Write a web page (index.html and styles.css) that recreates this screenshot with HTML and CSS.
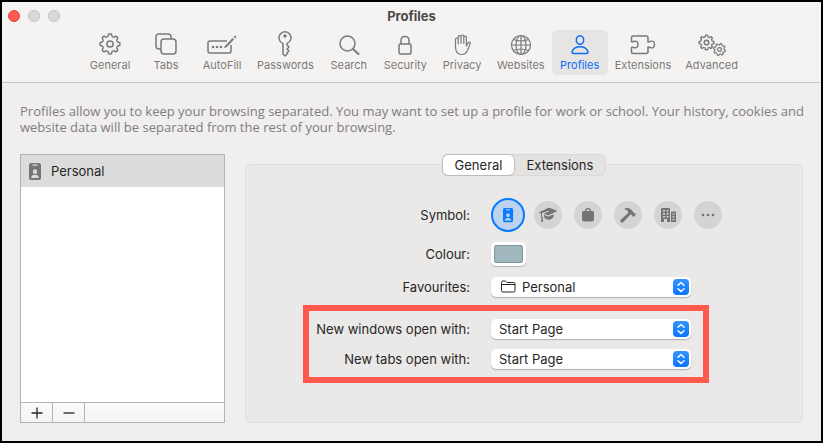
FILE: index.html
```html
<!DOCTYPE html>
<html lang="en-GB">
  <head>
    <meta charset="UTF-8" />
    <meta name="viewport" content="width=device-width, initial-scale=1.0" />
    <title>Profiles</title>
    <link rel="stylesheet" href="styles.css">
  </head>
  <body>
    <svg class="defs" aria-hidden="true">
      <defs>
        <path id="tooth" d="M-2.98-7.2Q-2-7.2-1.9-8L-1.6-9.2Q-1.5-9.9-.9-9.9H.9Q1.5-9.9 1.6-9.2L1.9-8Q2-7.2 2.98-7.2" />
        <g id="gear">
          <use href="#tooth" />
          <use href="#tooth" transform="rotate(45)" />
          <use href="#tooth" transform="rotate(90)" />
          <use href="#tooth" transform="rotate(135)" />
          <use href="#tooth" transform="rotate(180)" />
          <use href="#tooth" transform="rotate(225)" />
          <use href="#tooth" transform="rotate(270)" />
          <use href="#tooth" transform="rotate(315)" />
          <circle r="3.1" />
        </g>
        <path id="badge" fill-rule="evenodd" d="M2 0H10Q12 0 12 2V15Q12 17 10 17H2Q0 17 0 15V2Q0 0 2 0ZM4 1.5Q3.4 1.5 3.4 2.1T4 2.8H8Q8.6 2.8 8.6 2.1T8 1.5ZM6 6.3A2.2 2.4 0 1 0 6 11.100A2.200 2.400 0 1 0 6 6.300ZM2.200 15H9.800Q9.800 11.800 6 11.800T2.200 15Z" />
      </defs>
    </svg>

    <div class="window">
      <header class="header">
        <div class="titlebar">
          <div class="lights">
            <button class="light light--close" type="button" aria-label="Close"></button>
            <button class="light" type="button" aria-label="Minimise" disabled></button>
            <button class="light" type="button" aria-label="Zoom" disabled></button>
          </div>
          <h1 class="title">Profiles</h1>
        </div>

        <nav class="toolbar">
          <button class="tool" type="button">
            <svg class="tool__icon" width="28" height="26" viewBox="-14 -13 28 26"><use href="#gear" /></svg>
            General
          </button>
          <button class="tool" type="button">
            <svg class="tool__icon" width="28" height="26" viewBox="0 0 28 26"><path d="M9 18H7Q4 18 4 15V6Q4 3 7 3H16Q19 3 19 6V8" /><rect x="9" y="8" width="15" height="15" rx="3" /></svg>
            Tabs
          </button>
          <button class="tool" type="button">
            <svg class="tool__icon" width="32" height="26" viewBox="0 0 32 26"><path d="M21 10H4Q2 10 2 12V20Q2 22 4 22H23Q25 22 25 20V14" /><path class="solid" d="M19 15L26.500 7L28 8.500L20.600 16.300L17.800 17.200ZM27.500 6L29 4.500L30.500 6L29 7.500Z" /><circle class="solid" cx="7" cy="16" r="1.300" /><circle class="solid" cx="11" cy="16" r="1.300" /><circle class="solid" cx="15" cy="16" r="1.300" /></svg>
            AutoFill
          </button>
          <button class="tool" type="button">
            <svg class="tool__icon" width="28" height="26" viewBox="0 0 28 26"><path d="M12 12.500A6 6 0 1 1 16 12.500V14L18 16L16 18L18 20L16 22V23L14 25L12 23Z" /><circle class="solid" cx="14" cy="5" r="1.700" /></svg>
            Passwords
          </button>
          <button class="tool" type="button">
            <svg class="tool__icon" width="28" height="26" viewBox="0 0 28 26"><circle cx="12.500" cy="12.500" r="7.500" /><path class="thick" d="M18 18L23.500 23" /></svg>
            Search
          </button>
          <button class="tool" type="button">
            <svg class="tool__icon" width="28" height="26" viewBox="0 0 28 26"><rect x="8" y="13" width="12" height="10" rx="1.500" /><path d="M10 13V9.500Q10 5.500 14 5.500T18 9.500V13" /></svg>
            Security
          </button>
          <button class="tool" type="button">
            <svg class="tool__icon tool__icon--fine" width="28" height="26" viewBox="0 0 28 26"><path d="M7.500 16V8.500Q7.500 7 8.800 7T10.200 8.500V13V6Q10.200 4.700 11.600 4.700T13 6V12.500V5.300Q13 4 14.400 4T15.800 5.300V12.500V6.500Q15.800 5.200 17.100 5.200T18.400 6.500V15L20 12Q20.800 10.700 21.800 11.200T22 13L19.500 19.500Q17.800 23.500 13.700 23.500Q7.500 23.500 7.500 16Z" /></svg>
            Privacy
          </button>
          <button class="tool" type="button">
            <svg class="tool__icon tool__icon--fine" width="28" height="26" viewBox="0 0 28 26"><circle cx="14" cy="14" r="9.500" /><ellipse cx="14" cy="14" rx="5" ry="9.500" /><path d="M14 4.500V23.500M4.500 14H23.500M6.500 8.500Q14 11.500 21.500 8.500M6.500 19.500Q14 16.500 21.500 19.500" /></svg>
            Websites
          </button>
          <button class="tool tool--active" type="button" aria-current="page">
            <svg class="tool__icon" width="28" height="26" viewBox="0 0 28 26"><ellipse cx="14" cy="9" rx="3.700" ry="4.300" /><path d="M7.500 22.500Q6 22.500 6 21Q7.500 15.800 14 15.800T22 21Q22 22.500 20.500 22.500Z" /></svg>
            Profiles
          </button>
          <button class="tool" type="button">
            <svg class="tool__icon" width="28" height="26" viewBox="0 0 28 26"><path d="M4 5H17Q19 5 19 7V11Q20 11.300 21 10.500Q25.500 9 25.500 13.500T21 16.500Q20 15.700 19 16V20.500Q19 22.500 17 22.500H4Q2.500 22.500 2.500 21V16.500Q3.500 16 4.500 16.500Q9 17.500 9 13.500T4.500 10.500Q3.500 11 2.500 10.500V6.500Q2.500 5 4 5Z" /></svg>
            Extensions
          </button>
          <button class="tool" type="button">
            <svg class="tool__icon tool__icon--gears" width="30" height="26" viewBox="0 0 30 26"><use href="#gear" transform="translate(9.500 11.500) scale(.74)" /><use href="#gear" transform="translate(22.500 18.500) rotate(15) scale(.6)" /></svg>
            Advanced
          </button>
        </nav>
      </header>

      <main class="content">
        <p class="intro">Profiles allow you to keep your browsing separated. You may want to set up a profile for work or school. Your history, cookies and website data will be separated from the rest of your browsing.</p>

        <div class="columns">
          <section class="profiles" aria-label="Profiles">
            <ul class="profiles__list">
              <li>
                <button class="profile" type="button" aria-pressed="true">
                  <svg class="profile__icon" width="12" height="17" viewBox="0 0 12 17"><use href="#badge" /></svg>
                  Personal
                </button>
              </li>
            </ul>
            <div class="profiles__bar">
              <button class="bar-button" type="button" aria-label="Add profile"><svg width="12" height="12" viewBox="0 0 12 12"><path d="M6 .5V11.500M.5 6H11.500" /></svg></button>
              <button class="bar-button" type="button" aria-label="Remove profile"><svg width="12" height="12" viewBox="0 0 12 12"><path d="M.5 6H11.500" /></svg></button>
            </div>
          </section>

          <section class="panel">
            <div class="tabs" role="tablist">
              <button class="tab tab--active" type="button" role="tab" aria-selected="true">General</button>
              <button class="tab" type="button" role="tab" aria-selected="false">Extensions</button>
            </div>

            <form class="form">
              <div class="row" role="radiogroup" aria-labelledby="symbol-label">
                <span class="row__label" id="symbol-label">Symbol:</span>
                <div class="row__control symbols">
                  <label class="symbol">
                    <input class="symbol__input" type="radio" name="symbol" aria-label="Badge" checked>
                    <svg class="symbol__icon" width="18" height="18" viewBox="0 0 18 18"><use href="#badge" transform="translate(4 2) scale(.84)" /></svg>
                  </label>
                  <label class="symbol">
                    <input class="symbol__input" type="radio" name="symbol" aria-label="School">
                    <svg class="symbol__icon" width="18" height="18" viewBox="0 0 18 18"><path d="M.5 6L9 2Q10 1.500 11 2L17.500 4.500Q18 5 17.500 5.500L10 9Q9 9.500 8 9L4.500 7.500L10 5.500L9.500 4.800L3 7V10Q4.500 11.500 4 15.500Q2.500 16.500 2 15.500Q3 12 2 10.500V7.500L.5 7Q0 6.500.5 6ZM4.800 8.700L8 10.300Q9 10.700 10 10.300L14.500 8.300V11Q12 14.500 8.500 13.500L5.500 12Z" /></svg>
                  </label>
                  <label class="symbol">
                    <input class="symbol__input" type="radio" name="symbol" aria-label="Shopping">
                    <svg class="symbol__icon" width="18" height="18" viewBox="0 0 18 18"><path fill-rule="evenodd" d="M6 5Q6 2 9 2T12 5H13.500Q15 5 15 6.500V13.500Q15 15.500 13 15.500H5Q3 15.500 3 13.500V6.500Q3 5 4.500 5ZM7.200 5H10.800Q10.800 3.200 9 3.200T7.200 5Z" /></svg>
                  </label>
                  <label class="symbol">
                    <input class="symbol__input" type="radio" name="symbol" aria-label="Work">
                    <svg class="symbol__icon" width="18" height="18" viewBox="0 0 18 18"><path d="M5 3Q8.500 1 11.500 3L13.500 5Q14 6.500 15 6.500L17 8.500L14.500 11L12.700 9.300Q12.700 8.200 11.500 8.500L3.800 16.500Q2.800 17 1.800 16T1.500 14L9 7V5.500Q8 3.500 5 3Z" /></svg>
                  </label>
                  <label class="symbol">
                    <input class="symbol__input" type="radio" name="symbol" aria-label="Office">
                    <svg class="symbol__icon" width="18" height="18" viewBox="0 0 18 18"><path fill-rule="evenodd" d="M3 2H10Q11 2 11 3V16H8V13H5V16H2V3Q2 2 3 2ZM4 4V5.500H6V4ZM7.500 4V5.500H9.500V4ZM4 7V8.500H6V7ZM7.500 7V8.500H9.500V7ZM4 10V11.500H6V10ZM7.500 10V11.500H9.500V10ZM12 5.500H16Q17 5.500 17 6.500V16H12ZM13.500 7.500V8.700H15.500V7.500ZM13.500 10.300V11.500H15.500V10.300ZM13.500 13V14.300H15.500V13Z" /></svg>
                  </label>
                  <label class="symbol">
                    <input class="symbol__input" type="radio" name="symbol" aria-label="More">
                    <svg class="symbol__icon" width="18" height="18" viewBox="0 0 18 18"><circle cx="4" cy="9" r="1.300" /><circle cx="9" cy="9" r="1.300" /><circle cx="14" cy="9" r="1.300" /></svg>
                  </label>
                </div>
              </div>

              <div class="row row--colour">
                <label class="row__label" for="colour">Colour:</label>
                <div class="row__control"><input class="colour-well" type="color" id="colour" value="#9fb7bd"></div>
              </div>

              <div class="row">
                <label class="row__label" for="favourites">Favourites:</label>
                <div class="row__control popup popup--folder">
                  <svg class="popup__folder" width="15" height="13" viewBox="0 0 15 13"><path d="M1 4.500H14M.5 10.500V2.500Q.5 1 2 1H4.500L6 2.500H12.500Q14 2.500 14 4V10.500Q14 12 12.500 12H2Q.5 12 .5 10.500Z" /></svg>
                  <select class="popup__select" id="favourites"><option>Personal</option></select>
                  <svg class="popup__arrows" width="16" height="16" viewBox="0 0 16 16"><path d="M5 6.200L8 3.500L11 6.200M5 9.800L8 12.500L11 9.800" /></svg>
                </div>
              </div>

              <div class="open-with">
                <div class="row">
                  <label class="row__label" for="windows">New windows open with:</label>
                  <div class="row__control popup">
                    <select class="popup__select" id="windows"><option>Start Page</option></select>
                    <svg class="popup__arrows" width="16" height="16" viewBox="0 0 16 16"><path d="M5 6.200L8 3.500L11 6.200M5 9.800L8 12.500L11 9.800" /></svg>
                  </div>
                </div>
                <div class="row">
                  <label class="row__label" for="tabs">New tabs open with:</label>
                  <div class="row__control popup">
                    <select class="popup__select" id="tabs"><option>Start Page</option></select>
                    <svg class="popup__arrows" width="16" height="16" viewBox="0 0 16 16"><path d="M5 6.200L8 3.500L11 6.200M5 9.800L8 12.500L11 9.800" /></svg>
                  </div>
                </div>
              </div>
            </form>
          </section>
        </div>
      </main>
    </div>
  </body>
</html>
```
FILE: styles.css
```css
* {
  box-sizing: border-box;
}

body {
  background-color: #000;
  color: #262626;
  font-family: Inter, "Liberation Sans", sans-serif;
  font-size: 13px;
  line-height: 16px;
  margin: 0;
}

button,
select {
  color: inherit;
  font: inherit;
}

button {
  background: none;
  border: 0;
  padding: 0;
}

.defs {
  height: 0;
  position: absolute;
  width: 0;
}

.window {
  background-color: #f0eeef;
  border: 2px solid #000;
  display: flex;
  flex-direction: column;
  min-height: 100vh;
}

/* Title bar and toolbar */
.header {
  background-color: #f5f3f2;
  border-bottom: 1px solid #c9c7c6;
  border-radius: 4px 4px 0 0;
  padding-bottom: 7px;
}

.titlebar {
  align-items: center;
  display: grid;
  grid-template-columns: 1fr auto 1fr;
  height: 28px;
  padding: 0 6px;
}

.lights {
  display: flex;
  gap: 8px;
}

.light {
  background-color: #d9d8d6;
  border: 1px solid #c4c3c1;
  border-radius: 50%;
  height: 12px;
  width: 12px;
}

.light--close {
  background-color: #ff5b52;
  border-color: #e2453f;
}

.title {
  color: #4b4a49;
  font-size: 13px;
  font-weight: 700;
  margin: 0;
}

.toolbar {
  display: flex;
  justify-content: center;
  padding-left: 4px;
}

.tool {
  align-items: center;
  border-radius: 6px;
  color: #7b7a78;
  display: flex;
  flex-direction: column;
  font-size: 11px;
  height: 45px;
  min-width: 56px;
  padding: 1px 7px 0;
}

.tool--active {
  background-color: #e6e5e4;
  color: #0a6cf5;
}

.tool__icon {
  fill: none;
  stroke: currentColor;
  stroke-linejoin: round;
  stroke-width: 1.5;
}

.tool__icon--fine {
  stroke-width: 1.2;
}

.tool__icon--gears {
  stroke-width: 2;
}

.tool__icon .solid {
  fill: currentColor;
  stroke: none;
}

.tool__icon .thick {
  stroke-linecap: round;
  stroke-width: 2;
}

/* Page */
.content {
  display: flex;
  flex: 1;
  flex-direction: column;
  padding: 20px 10px 18px 18px;
}

.intro {
  color: #7f7d7e;
  font-family: "Open Sans", "Liberation Sans", sans-serif;
  margin: 0 0 19px;
}

.columns {
  display: flex;
  flex: 1;
  gap: 20px;
  padding-right: 8px;
}

.profiles {
  background-color: #fff;
  border: 1px solid #b3b2b2;
  display: flex;
  flex: 0 0 205px;
  flex-direction: column;
}

.profiles__list {
  flex: 1;
  list-style: none;
  margin: 0;
  padding: 0;
}

.profile {
  align-items: center;
  background-color: #dcdcdc;
  display: flex;
  gap: 10px;
  height: 32px;
  padding: 0 8px;
  width: 100%;
}

.profile__icon {
  fill: #757575;
}

.profiles__bar {
  background-image: linear-gradient(#fbfbfb, #f3f3f3);
  border-top: 1px solid #b3b2b2;
  display: flex;
  height: 20px;
}

.bar-button {
  align-items: center;
  border-right: 1px solid #b3b2b2;
  display: flex;
  justify-content: center;
  width: 32px;
}

.bar-button svg {
  stroke: #262626;
  stroke-width: 1.3;
}

/* Settings panel, with the tabs sitting on its top edge */
.panel {
  background-color: #eae9e7;
  border: 1px solid #e0dfdd;
  border-radius: 5px;
  flex: 1;
  margin-top: 10px;
}

.tabs {
  background-color: #e4e3e1;
  border: 1px solid #dad9d7;
  border-radius: 6px;
  display: flex;
  height: 22px;
  margin: -11px auto 22px;
  width: fit-content;
}

.tab {
  border-radius: 5px;
  padding: 0 12px;
}

.tab--active {
  background-color: #fff;
  box-shadow: 0 0 1px 1px rgba(0, 0, 0, 0.15);
}

.form {
  display: flex;
  flex-direction: column;
  padding-left: 2px;
}

.row {
  align-items: center;
  display: flex;
}

.row::after {
  content: "";
  flex: 1;
}

.row__label {
  flex: 2;
  text-align: right;
  white-space: nowrap;
}

.row__control {
  flex: 0 0 200px;
  margin-left: 21px;
  min-width: 0;
}

.symbols {
  align-items: center;
  display: flex;
  gap: 6px;
  height: 34px;
}

.symbol {
  display: grid;
  flex: 0 0 34px;
  place-items: center;
}

.symbol__input,
.symbol__icon {
  grid-area: 1 / 1;
}

.symbol__input {
  appearance: none;
  background-color: #d4d4d2;
  border-radius: 50%;
  height: 28px;
  margin: 0;
  width: 28px;
}

.symbol__input:checked {
  background-color: #bdd2ee;
  border: 2px solid #067bff;
  height: 34px;
  width: 34px;
}

.symbol__icon {
  fill: #747473;
  pointer-events: none;
}

.symbol__input:checked + .symbol__icon {
  fill: #067bff;
}

.row--colour {
  margin: 10px 0;
}

.colour-well {
  appearance: none;
  background-color: #fff;
  border: 0;
  border-radius: 5px;
  box-shadow: 0 1px 1px rgba(0, 0, 0, 0.25);
  display: block;
  height: 24px;
  padding: 3px;
  width: 35px;
}

.colour-well::-webkit-color-swatch-wrapper {
  padding: 0;
}

.colour-well::-webkit-color-swatch {
  border: 1px solid #7f979d;
  border-radius: 2px;
}

.popup {
  height: 22px;
  padding: 1px 0;
  position: relative;
}

.popup__select {
  appearance: none;
  background-color: #fff;
  border: 0;
  border-radius: 5px;
  box-shadow: 0 1px 1px rgba(0, 0, 0, 0.25);
  display: block;
  height: 20px;
  padding: 0 24px 0 8px;
  width: 100%;
}

.popup--folder .popup__select {
  padding-left: 31px;
}

.popup__folder {
  fill: none;
  left: 10px;
  pointer-events: none;
  position: absolute;
  stroke: #262626;
  top: 4px;
}

.popup__arrows {
  background-image: linear-gradient(#3296ff, #0a74ff);
  border-radius: 4px;
  fill: none;
  pointer-events: none;
  position: absolute;
  right: 2px;
  stroke: #fff;
  stroke-linecap: round;
  stroke-linejoin: round;
  stroke-width: 1.5;
  top: 3px;
}

/* Callout frame around the two "open with" rows */
.open-with {
  display: flex;
  flex-direction: column;
  gap: 8px;
  margin-top: 20px;
  position: relative;
}

.open-with::after {
  border: 6px solid #ff5a4d;
  content: "";
  inset: -13px 93px -13px 55px;
  pointer-events: none;
  position: absolute;
}
```
